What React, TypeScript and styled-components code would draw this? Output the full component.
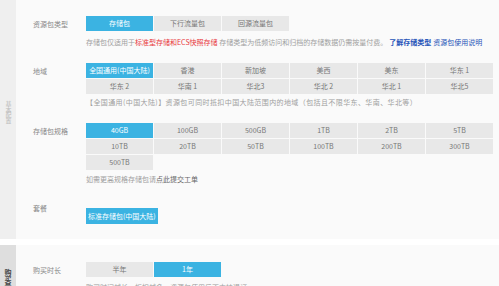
import React from 'react';
import styled, { createGlobalStyle } from 'styled-components';

const GlobalStyle = createGlobalStyle`
  html, body {
    margin: 0;
    padding: 0;
    background: #ffffff;
    font-family: "Noto Sans CJK SC", "Liberation Sans", sans-serif;
    overflow: hidden;
  }
`;

const Page = styled.div`
  width: 499px;
  height: 286px;
  overflow: hidden;
`;

const Section = styled.section<{ $gapTop?: number }>`
  display: flex;
  background: #fafafa;
  margin-top: ${({ $gapTop }) => $gapTop ?? 0}px;
`;

const SideTab = styled.div<{ $dark?: boolean; $textTop: number }>`
  width: 16px;
  flex-shrink: 0;
  background: ${({ $dark }) => ($dark ? '#dedede' : '#efefef')};
  display: flex;
  align-items: flex-start;
  justify-content: center;
  padding-top: ${({ $textTop }) => $textTop}px;
  box-sizing: border-box;
`;

const SideText = styled.span<{ $dark?: boolean }>`
  writing-mode: vertical-rl;
  font-size: ${({ $dark }) => ($dark ? 7 : 6)}px;
  line-height: 16px;
  letter-spacing: ${({ $dark }) => ($dark ? 0 : -0.5)}px;
  color: ${({ $dark }) => ($dark ? '#444' : '#b8b8b8')};
  font-weight: ${({ $dark }) => ($dark ? 700 : 400)};
`;

const Body = styled.div<{ $pt: number; $pb: number }>`
  flex: 1;
  padding: ${({ $pt }) => $pt}px 0 ${({ $pb }) => $pb}px 17px;
`;

const Row = styled.div<{ $mt?: number }>`
  display: grid;
  grid-template-columns: 53px 1fr;
  margin-top: ${({ $mt }) => $mt ?? 0}px;
`;

const Label = styled.div`
  font-size: 7px;
  line-height: 16px;
  color: #888;
`;

const Options = styled.div<{ $cols: number }>`
  display: grid;
  grid-template-columns: repeat(${({ $cols }) => $cols}, 67px);
  grid-auto-rows: 15px;
  gap: 1px;
`;

const Cell = styled.div<{ $active?: boolean }>`
  background: ${({ $active }) => ($active ? '#3bb3e2' : '#e8e8e8')};
  color: ${({ $active }) => ($active ? '#ffffff' : '#777')};
  font-size: 7px;
  line-height: 15px;
  text-align: center;
  white-space: nowrap;
`;

const Tag = styled.div`
  display: inline-block;
  background: #3bb3e2;
  color: #fff;
  font-size: 7px;
  line-height: 16px;
  padding: 0 2px;
`;

const Note = styled.div<{ $mt?: number; $ls?: number }>`
  font-size: 7px;
  line-height: 10px;
  color: #a0a0a0;
  white-space: nowrap;
  margin-top: ${({ $mt }) => $mt ?? 0}px;
  letter-spacing: ${({ $ls }) => $ls ?? 0}px;
`;

const Red = styled.span`
  color: #e8383d;
`;

const Link = styled.span<{ $bold?: boolean }>`
  color: #2553b8;
  font-weight: ${({ $bold }) => ($bold ? 700 : 400)};
  margin-left: 2px;
`;

const Dark = styled.span`
  color: #666;
`;

const regions = [
  '全国通用(中国大陆)', '香港', '新加坡', '美西', '美东', '华东 1',
  '华东 2', '华南 1', '华北3', '华北 2', '华北 1', '华北5',
];

const sizes = [
  '40GB', '100GB', '500GB', '1TB', '2TB', '5TB',
  '10TB', '20TB', '50TB', '100TB', '200TB', '300TB',
  '500TB',
];

export default function App() {
  return (
    <Page>
      <GlobalStyle />
      <Section>
        <SideTab $textTop={101}>
          <SideText>基本配置</SideText>
        </SideTab>
        <Body $pt={16} $pb={15}>
          <Row>
            <Label>资源包类型</Label>
            <div>
              <Options $cols={3}>
                <Cell $active>存储包</Cell>
                <Cell>下行流量包</Cell>
                <Cell>回源流量包</Cell>
              </Options>
              <Note $mt={6}>
                存储包仅适用于<Red>标准型存储和ECS快照存储</Red> 存储类型为低频访问和归档的存储数据仍需按量付费。
                <Link $bold>了解存储类型</Link>
                <Link>资源包使用说明</Link>
              </Note>
            </div>
          </Row>
          <Row $mt={16}>
            <Label>地域</Label>
            <div>
              <Options $cols={6}>
                {regions.map((r, i) => (
                  <Cell key={r} $active={i === 0}>{r}</Cell>
                ))}
              </Options>
              <Note $mt={3} $ls={0.4}>
                【全国通用(中国大陆)】资源包可同时抵扣中国大陆范围内的地域（包括且不限华东、华南、华北等）
              </Note>
            </div>
          </Row>
          <Row $mt={16}>
            <Label>存储包规格</Label>
            <div>
              <Options $cols={6}>
                {sizes.map((s, i) => (
                  <Cell key={s} $active={i === 0}>{s}</Cell>
                ))}
              </Options>
              <Note $mt={4}>
                如需更高规格存储包请<Dark>点此提交工单</Dark>
              </Note>
            </div>
          </Row>
          <Row $mt={16}>
            <Label>套餐</Label>
            <div>
              <Tag>标准存储包(中国大陆)</Tag>
            </div>
          </Row>
        </Body>
      </Section>
      <Section $gapTop={6}>
        <SideTab $dark $textTop={24}>
          <SideText $dark>购买量</SideText>
        </SideTab>
        <Body $pt={17} $pb={10}>
          <Row>
            <Label>购买时长</Label>
            <div>
              <Options $cols={2}>
                <Cell>半年</Cell>
                <Cell $active>1年</Cell>
              </Options>
              <Note $mt={5}>
                购买时间越长，折扣越多。资源包使用后不支持退订
              </Note>
            </div>
          </Row>
        </Body>
      </Section>
    </Page>
  );
}
